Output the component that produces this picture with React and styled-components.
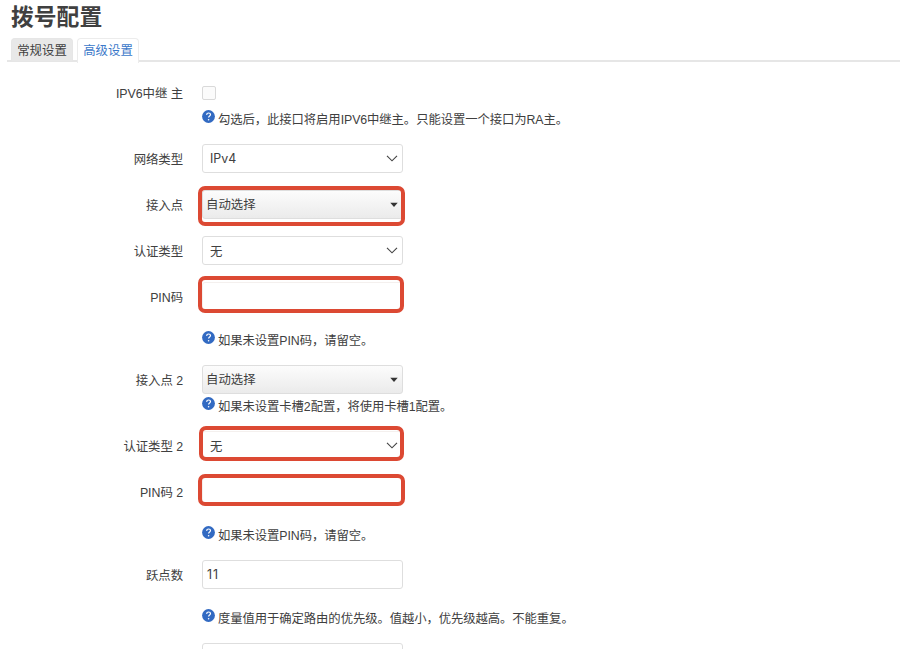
import React from "react";
import styled, { createGlobalStyle } from "styled-components";

const GlobalStyle = createGlobalStyle`
  * { box-sizing: border-box; }
  body {
    margin: 0;
    background: #fff;
    color: #404040;
    font-family: "Liberation Sans", "Noto Sans CJK SC", sans-serif;
    font-size: 12.4px;
    overflow: hidden;
  }
`
const Page = styled.main`
  height: 649px;
  overflow: hidden;
`
const Title = styled.h2`
  margin: 0;
  padding-left: 11px;
  height: 37px;
  line-height: 35px;
  font-size: 22.8px;
  font-weight: 700;
`
const Tabs = styled.nav`
  display: flex;
  gap: 4px;
  height: 25px;
  margin-left: 7px;
  padding-left: 4px;
  border-bottom: 2px solid #e6e6e6;
`
const Tab = styled.a`
  height: ${(props) => (props.$active ? "25px" : "23px")};
  width: 62px;
  margin-top: 1px;
  line-height: 25px;
  text-align: center;
  border: 1px solid ${(props) => (props.$active ? "#ececec" : "#e6e6e6")};
  border-bottom: 0;
  border-radius: 4px 4px 0 0;
  background: ${(props) => (props.$active ? "#fff" : "#e8e8e8")};
  color: ${(props) => (props.$active ? "#3b78c9" : "#404040")};
`
const Form = styled.form`
  padding-top: 16px;
`
const Row = styled.div`
  display: flex;
  gap: 19px;
  height: ${(props) => props.$height}px;
`
const Label = styled.label`
  width: 183px;
  line-height: 32px;
  text-align: right;
  white-space: nowrap;
  letter-spacing: -0.05px;
`
const Field = styled.div`
  flex: 1;
`
const Control = styled.div`
  position: relative;
  width: 201px;
  height: 29px;
`
const Box = styled.div`
  display: flex;
  align-items: center;
  justify-content: space-between;
  width: 201px;
  height: 29px;
  padding: 0 4px 0 ${(props) => (props.$indent ? 7 : 4)}px;
  border: 1px solid ${(props) => (props.$plain ? "#f4f0ee" : "#dedede")};
  border-radius: 3px;
  background: ${(props) => (props.$button ? "linear-gradient(#fcfcfc, #ebebeb)" : "#fff")};
`
const Value = styled.span`
  margin-left: ${(props) => (props.$button ? "-1px" : "0")};
  padding-bottom: ${(props) => (props.$button ? "1px" : "0")};
  font-family: Inter, "Noto Sans CJK SC", sans-serif;
  font-size: 12.4px;
  letter-spacing: ${(props) => (props.$wide ? "1px" : "0")};
`
const Check = styled.span`
  display: block;
  width: 14px;
  height: 14px;
  margin-top: 8px;
  border: 1px solid #d9d9d9;
  border-radius: 2px;
  background: #fbfbfb;
`
const CheckLine = styled.div`
  display: flex;
  height: 29px;
`
// red frame drawn over a field
const Mark = styled.span`
  position: absolute;
  top: ${(props) => props.$top}px;
  right: ${(props) => props.$right}px;
  bottom: ${(props) => props.$bottom}px;
  left: ${(props) => props.$left}px;
  border: 4px solid #dc4933;
  border-radius: 7px;
`
const Hint = styled.div`
  display: flex;
  gap: 3px;
  height: 20px;
  margin-top: ${(props) => (props.$tight ? 2 : 19)}px;
  line-height: 22px;
  font-size: 12.35px;
  letter-spacing: -0.08px;
  white-space: nowrap;
  svg { margin-top: 1px; flex: none; }
`

const HelpIcon = () => (
  <svg width="13" height="13" viewBox="0 0 13 13" fill="none">
    <circle cx="6.5" cy="6.5" r="6.4" fill="#326ac2" />
    <path d="M4.6 4.9C4.7 3.6 5.5 3 6.6 3s1.9.7 1.9 1.6c0 1.4-1.9 1.4-1.9 3" stroke="#fff" strokeWidth="1.2" />
    <circle cx="6.6" cy="9.7" r=".8" fill="#fff" />
  </svg>
)
const Chevron = () => (
  <svg width="12" height="8" viewBox="0 0 12 8" fill="none">
    <path d="M1 .8l5 5 5-5" stroke="#444" strokeWidth="1.15" />
  </svg>
)
const Caret = () => (
  <svg width="8" height="5" viewBox="0 0 8 5">
    <path d="M.3 .8h7.4L4 5z" fill="#333" />
  </svg>
)

const rows = [
  { label: "IPV6中继 主", type: "check", height: 66, hint: "勾选后，此接口将启用IPV6中继主。只能设置一个接口为RA主。" },
  { label: "网络类型", type: "select", value: "IPv4", height: 46 },
  { label: "接入点", type: "button", value: "自动选择", height: 46, mark: [-4, -2, -7, -4] },
  { label: "认证类型", type: "select", value: "无", height: 46 },
  { label: "PIN码", type: "text", height: 83, mark: [-6, -1, -2, -4], hint: "如果未设置PIN码，请留空。" },
  { label: "接入点 2", type: "button", value: "自动选择", height: 66, hint: "如果未设置卡槽2配置，将使用卡槽1配置。" },
  { label: "认证类型 2", type: "select", value: "无", height: 46, mark: [-5, -1, -1, -3] },
  { label: "PIN码 2", type: "text", height: 83, mark: [-3, -2, 0, -4], hint: "如果未设置PIN码，请留空。" },
  { label: "跃点数", type: "text", value: "11", height: 83, hint: "度量值用于确定路由的优先级。值越小，优先级越高。不能重复。" },
  { label: "", type: "text", height: 46 },
]

const Input = ({ type, value, mark }) => {
  if (type === "check") return <CheckLine><Check /></CheckLine>
  return (
    <Control>
      <Box $indent={type === "select"} $button={type === "button"} $plain={mark && type !== "button"}>
        <Value $wide={type === "text"} $button={type === "button"}>{value}</Value>
        {type === "select" && <Chevron />}
        {type === "button" && <Caret />}
      </Box>
      {mark && <Mark $top={mark[0]} $right={mark[1]} $bottom={mark[2]} $left={mark[3]} />}
    </Control>
  )
}

const App = () => {
  return (
    <Page>
      <GlobalStyle />
      <Title>拨号配置</Title>
      <Tabs>
        <Tab>常规设置</Tab>
        <Tab $active>高级设置</Tab>
      </Tabs>
      <Form>
        {rows.map((row, i) => (
          <Row key={i} $height={row.height}>
            <Label>{row.label}</Label>
            <Field>
              <Input type={row.type} value={row.value} mark={row.mark} />
              {row.hint && (
                <Hint $tight={row.height === 66}>
                  <HelpIcon />
                  <span>{row.hint}</span>
                </Hint>
              )}
            </Field>
          </Row>
        ))}
      </Form>
    </Page>
  )
}

export default App
